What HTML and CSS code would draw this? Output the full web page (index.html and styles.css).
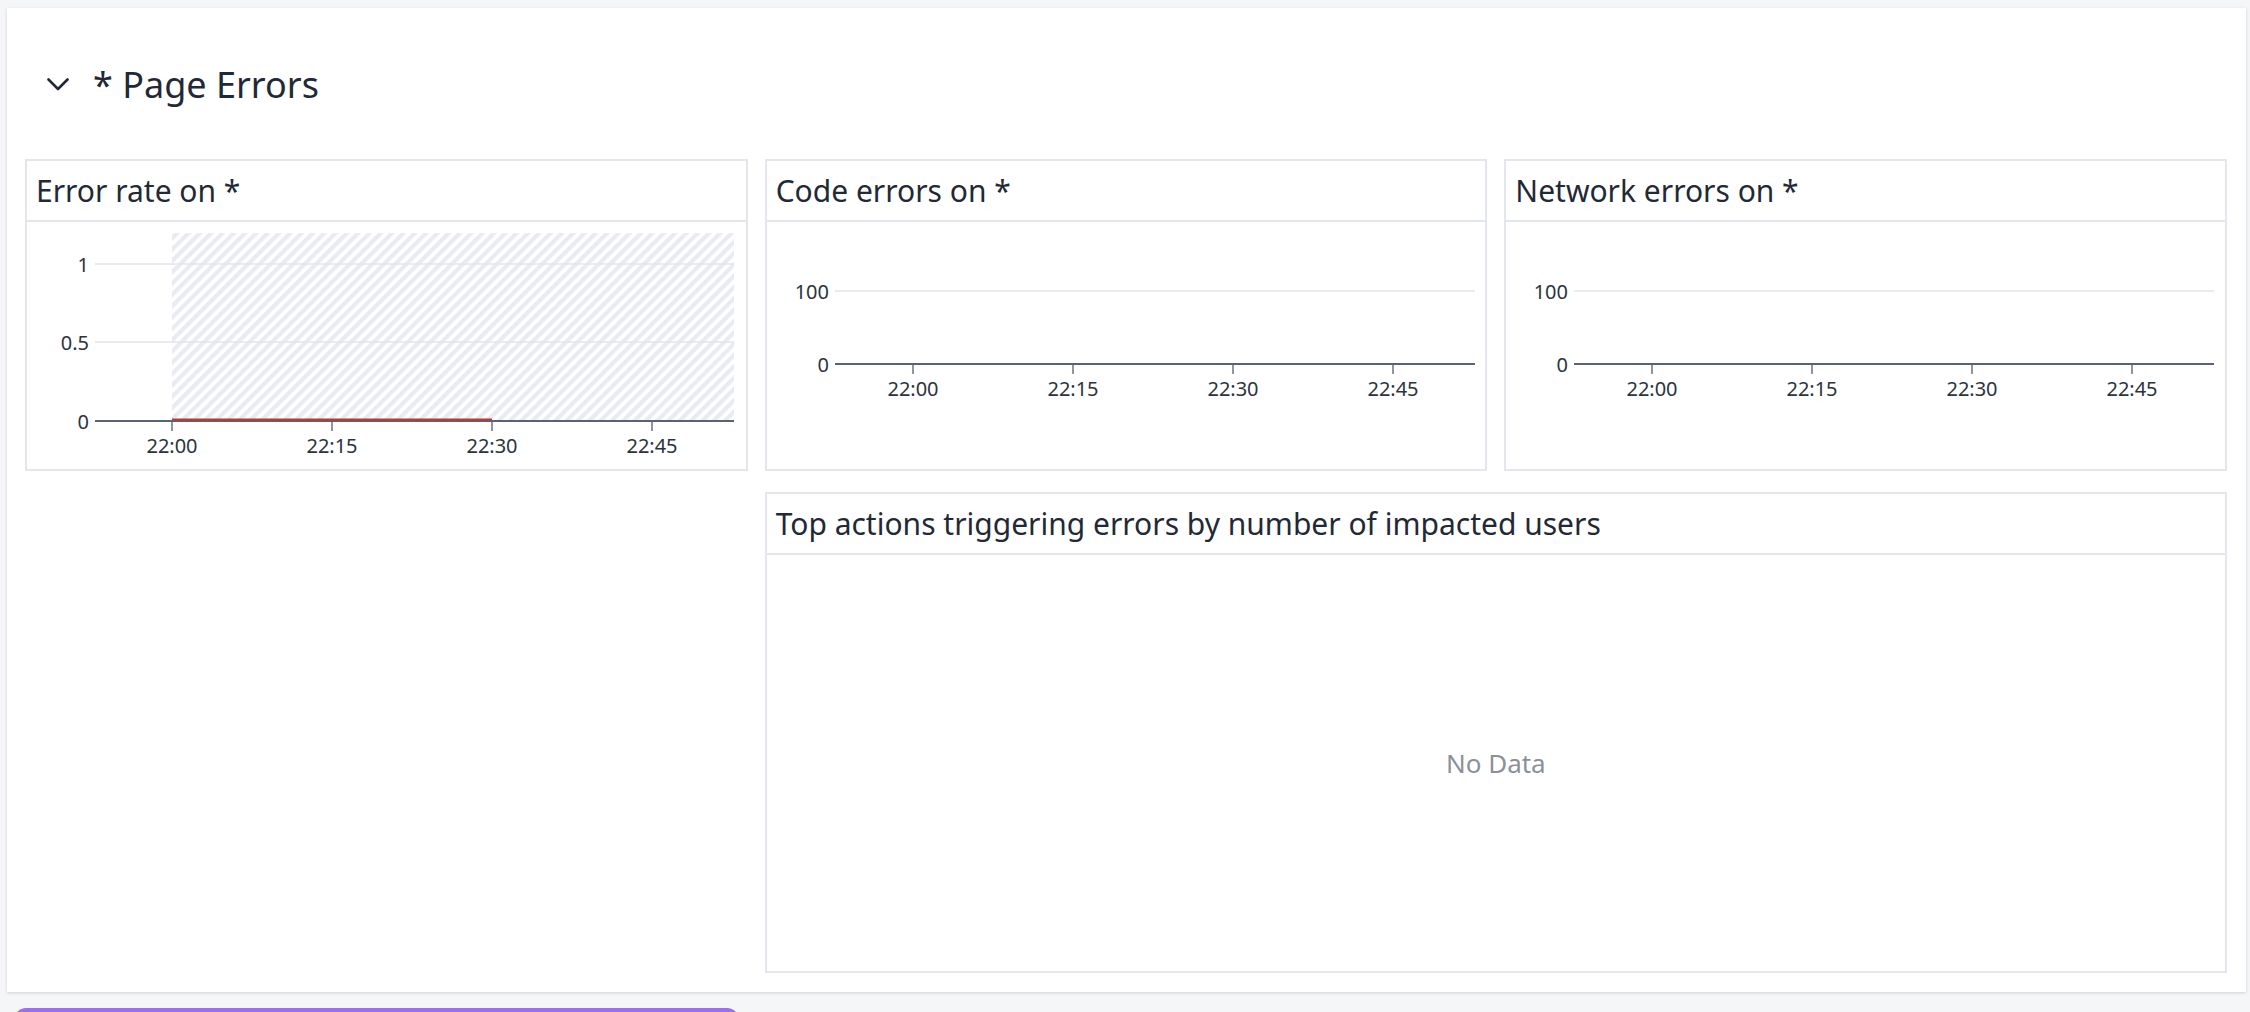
FILE: index.html
```html
<!DOCTYPE html>
<html lang="en">
<head>
<meta charset="utf-8">
<title>Page Errors</title>
<link rel="stylesheet" href="styles.css">
</head>
<body>
<div class="page">
  <section class="panel">
    <header class="section-head">
      <svg class="chevron" width="22" height="13" viewBox="0 0 22 13"><path d="M1.5 1.5 L11 11 L20.5 1.5" fill="none" stroke="#1f2a36" stroke-width="2.6" stroke-linecap="round" stroke-linejoin="round"/></svg>
      <h1 class="section-title">* Page Errors</h1>
    </header>
    <div class="grid">
      <div class="card card-1">
        <div class="card-head"><h2 class="card-title">Error rate on *</h2></div>
        <div class="card-body">
          <svg class="chart" width="718" height="247" viewBox="0 0 718 247">
            <defs>
              <pattern id="hatch" patternUnits="userSpaceOnUse" width="8" height="8" patternTransform="rotate(45)">
                <rect x="0" y="0" width="4.2" height="8" fill="#e9ebf1"/>
              </pattern>
            </defs>
            <rect x="145" y="11" width="562" height="188" fill="url(#hatch)"/>
            <line class="grid-line" x1="68" y1="42" x2="707" y2="42"/>
            <line class="grid-line" x1="68" y1="120" x2="707" y2="120"/>
            <line class="tick" x1="145" y1="199" x2="145" y2="209"/>
            <line class="tick" x1="305" y1="199" x2="305" y2="209"/>
            <line class="tick" x1="465" y1="199" x2="465" y2="209"/>
            <line class="tick" x1="625" y1="199" x2="625" y2="209"/>
            <line class="axis" x1="68" y1="199" x2="707" y2="199"/>
            <line class="series" x1="145" y1="197.5" x2="465" y2="197.5"/>
            <text class="ylab" x="62" y="42">1</text>
            <text class="ylab" x="62" y="120">0.5</text>
            <text class="ylab" x="62" y="199">0</text>
            <text class="xlab" x="145" y="223">22:00</text>
            <text class="xlab" x="305" y="223">22:15</text>
            <text class="xlab" x="465" y="223">22:30</text>
            <text class="xlab" x="625" y="223">22:45</text>
          </svg>
        </div>
      </div>
      <div class="card card-2">
        <div class="card-head"><h2 class="card-title">Code errors on *</h2></div>
        <div class="card-body">
          <svg class="chart" width="718" height="247" viewBox="0 0 718 247">
            <line class="grid-line" x1="68" y1="69" x2="708" y2="69"/>
            <line class="tick" x1="146" y1="142" x2="146" y2="152"/>
            <line class="tick" x1="306" y1="142" x2="306" y2="152"/>
            <line class="tick" x1="466" y1="142" x2="466" y2="152"/>
            <line class="tick" x1="626" y1="142" x2="626" y2="152"/>
            <line class="axis" x1="68" y1="142" x2="708" y2="142"/>
            <text class="ylab" x="62" y="69">100</text>
            <text class="ylab" x="62" y="142">0</text>
            <text class="xlab" x="146" y="166">22:00</text>
            <text class="xlab" x="306" y="166">22:15</text>
            <text class="xlab" x="466" y="166">22:30</text>
            <text class="xlab" x="626" y="166">22:45</text>
          </svg>
        </div>
      </div>
      <div class="card card-3">
        <div class="card-head"><h2 class="card-title">Network errors on *</h2></div>
        <div class="card-body">
          <svg class="chart" width="718" height="247" viewBox="0 0 718 247">
            <line class="grid-line" x1="68" y1="69" x2="708" y2="69"/>
            <line class="tick" x1="146" y1="142" x2="146" y2="152"/>
            <line class="tick" x1="306" y1="142" x2="306" y2="152"/>
            <line class="tick" x1="466" y1="142" x2="466" y2="152"/>
            <line class="tick" x1="626" y1="142" x2="626" y2="152"/>
            <line class="axis" x1="68" y1="142" x2="708" y2="142"/>
            <text class="ylab" x="62" y="69">100</text>
            <text class="ylab" x="62" y="142">0</text>
            <text class="xlab" x="146" y="166">22:00</text>
            <text class="xlab" x="306" y="166">22:15</text>
            <text class="xlab" x="466" y="166">22:30</text>
            <text class="xlab" x="626" y="166">22:45</text>
          </svg>
        </div>
      </div>
      <div class="card card-4">
        <div class="card-head"><h2 class="card-title">Top actions triggering errors by number of impacted users</h2></div>
        <div class="card-body empty">
          <span class="no-data">No Data</span>
        </div>
      </div>
    </div>
  </section>
  <div class="next-bar"></div>
</div>
</body>
</html>
```

FILE: styles.css
```css
html, body {
  margin: 0;
  padding: 0;
}
body {
  background: #f5f6f8;
  font-family: "Noto Sans", "Open Sans", sans-serif;
  color: #1f2a36;
  overflow: hidden;
  height: 1012px;
}
.page {
  padding: 8px 4px 0 7px;
}
.panel {
  background: #ffffff;
  box-shadow: 0 1px 3px rgba(30, 40, 60, 0.18);
  padding: 0 19px 19px 18px;
}
.section-head {
  height: 151px;
  display: flex;
  align-items: center;
  padding-left: 22px;
  padding-top: 2px;
  box-sizing: border-box;
}
.chevron {
  display: block;
  margin-right: 24px;
}
.section-title {
  margin: 0;
  font-size: 36px;
  font-weight: 400;
  line-height: 1.2;
  color: #1f2a36;
}
.grid {
  display: grid;
  grid-template-columns: repeat(3, 1fr);
  grid-template-rows: 312px 481px;
  column-gap: 17px;
  row-gap: 21px;
}
.card {
  border: 2px solid #e3e6ec;
  display: flex;
  flex-direction: column;
  min-width: 0;
  overflow: hidden;
}
.card-4 {
  grid-column: 2 / 4;
  grid-row: 2;
}
.card-head {
  height: 59px;
  border-bottom: 2px solid #e3e6ec;
  display: flex;
  align-items: center;
  padding-left: 9px;
  flex: none;
}
.card-title {
  margin: 0;
  font-size: 30px;
  font-weight: 400;
  line-height: 1.2;
  color: #1f2a36;
  white-space: nowrap;
}
.card-body {
  flex: 1;
  position: relative;
}
.card-body.empty {
  display: flex;
  align-items: center;
  justify-content: center;
}
.chart {
  display: block;
}
.chart text {
  font-family: "Noto Sans", "Open Sans", sans-serif;
  font-size: 20px;
  fill: #2b3340;
  dominant-baseline: central;
}
.ylab {
  text-anchor: end;
}
.xlab {
  text-anchor: middle;
}
.grid-line {
  stroke: #e3e5ea;
  stroke-width: 1.5;
}
.axis {
  stroke: #5b6273;
  stroke-width: 2;
}
.tick {
  stroke: #6b7284;
  stroke-width: 1.5;
}
.series {
  stroke: #c2372d;
  stroke-width: 2;
}
.no-data {
  font-size: 26px;
  color: #8b9199;
}
.next-bar {
  margin: 16px 0 0 7px;
  width: 725px;
  height: 40px;
  background: #9b6ef3;
  border-radius: 12px 12px 0 0;
}
```
